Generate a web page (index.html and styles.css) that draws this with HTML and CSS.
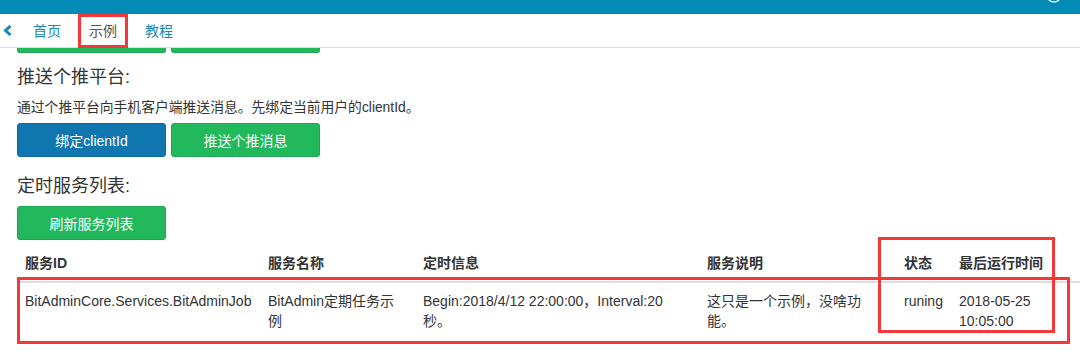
FILE: index.html
```html
<!DOCTYPE html>
<html lang="zh-CN">
<head>
<meta charset="utf-8">
<title>示例</title>
<link rel="stylesheet" href="styles.css">
</head>
<body>
<div class="topbar">
  <svg class="top-icon" width="16" height="14" viewBox="0 0 16 14"><circle cx="8" cy="-5" r="7" fill="none" stroke="#d6f1f8" stroke-width="1.6"/></svg>
</div>
<nav class="tabs">
  <svg class="back" width="9" height="11" viewBox="0 0 9 11"><path d="M7.5 1 L2.5 5.5 L7.5 10" fill="none" stroke="#1787b5" stroke-width="3" stroke-linejoin="miter"/></svg>
  <a class="tab">首页</a>
  <a class="tab active">示例</a>
  <a class="tab">教程</a>
</nav>
<main class="content">
  <div class="peek"><span class="peek-btn"></span><span class="peek-btn"></span></div>
  <h4 class="title first">推送个推平台:</h4>
  <p class="desc">通过个推平台向手机客户端推送消息。先绑定当前用户的clientId。</p>
  <div class="btn-row">
    <button class="btn btn-blue">绑定clientId</button>
    <button class="btn btn-green">推送个推消息</button>
  </div>
  <h4 class="title second">定时服务列表:</h4>
  <div class="btn-row">
    <button class="btn btn-green">刷新服务列表</button>
  </div>
  <table class="table">
    <colgroup>
      <col class="c1"><col class="c2"><col class="c3"><col class="c4"><col class="c5"><col class="c6">
    </colgroup>
    <thead>
      <tr><th>服务ID</th><th>服务名称</th><th>定时信息</th><th>服务说明</th><th>状态</th><th>最后运行时间</th></tr>
    </thead>
    <tbody>
      <tr>
        <td>BitAdminCore.Services.BitAdminJob</td>
        <td>BitAdmin定期任务示例</td>
        <td class="timing">Begin:2018/4/12 22:00:00，Interval:20秒。</td>
        <td>这只是一个示例，没啥功能。</td>
        <td>runing</td>
        <td>2018-05-25 10:05:00</td>
      </tr>
    </tbody>
  </table>
</main>
<div class="mark mark-tab"></div>
<div class="mark mark-row"></div>
<div class="mark mark-col"></div>
</body>
</html>
```
FILE: styles.css
```css
html, body {
  margin: 0;
  padding: 0;
  background: #fff;
}
body {
  width: 1080px;
  height: 360px;
  overflow: hidden;
  position: relative;
  font-family: "Liberation Sans", "Noto Sans CJK SC", sans-serif;
  font-size: 14px;
  color: #333;
}
.topbar {
  height: 14px;
  background: #038bb8;
  display: flex;
  justify-content: flex-end;
  padding-right: 18px;
}
.top-icon { display: block; }
.tabs {
  height: 33px;
  border-bottom: 1px solid #dedede;
  display: flex;
  align-items: center;
}
.back {
  display: block;
  margin-left: 3px;
  margin-right: 7px;
}
.tab {
  padding: 0 14px;
  color: #1787b5;
  font-size: 14px;
  line-height: 20px;
}
.tab.active { color: #555; }
.content {
  padding-left: 17px;
}
.peek {
  display: flex;
  gap: 5px;
  height: 5px;
}
.peek-btn {
  width: 149px;
  height: 5px;
  background: #21b95c;
  border: 1px solid #1ea653;
  border-top: 0;
  box-sizing: border-box;
  border-radius: 0 0 3px 3px;
}
.title {
  margin: 0;
  font-size: 18px;
  font-weight: normal;
  line-height: 20px;
  color: #333;
}
.title.first { margin-top: 14px; }
.title.second { margin-top: 19px; }
.desc {
  margin: 12px 0 6px;
  font-size: 13.8px;
  line-height: 18px;
}
.btn-row {
  display: flex;
  gap: 5px;
}
.title.second + .btn-row { margin-top: 10px; }
.btn {
  width: 149px;
  height: 34px;
  border-radius: 3px;
  font-family: inherit;
  font-size: 14px;
  color: #fff;
  padding: 0;
  box-sizing: border-box;
}
.btn-blue {
  background: #0f76b0;
  border: 1px solid #0d6aa0;
}
.btn-green {
  background: #21b95c;
  border: 1px solid #1ea653;
}
.table {
  margin-top: 5px;
  width: 1063px;
  table-layout: fixed;
  border-collapse: collapse;
}
.c1 { width: 243px; }
.c2 { width: 155px; }
.c3 { width: 284px; }
.c4 { width: 197px; }
.c5 { width: 55px; }
.c6 { width: 129px; }
.table th, .table td {
  padding: 8px;
  line-height: 20px;
  text-align: left;
  vertical-align: top;
}
.table td.timing { padding-right: 32px; }
.table th {
  font-weight: bold;
  vertical-align: bottom;
  border-bottom: 2px solid #dddddd;
}
.mark {
  position: absolute;
  border: 3px solid #f23838;
  box-sizing: border-box;
}
.mark-tab { left: 78px; top: 14px; width: 50px; height: 34px; }
.mark-row { left: 17px; top: 277px; width: 1053px; height: 67px; }
.mark-col { left: 878px; top: 237px; width: 177px; height: 96px; }
```
